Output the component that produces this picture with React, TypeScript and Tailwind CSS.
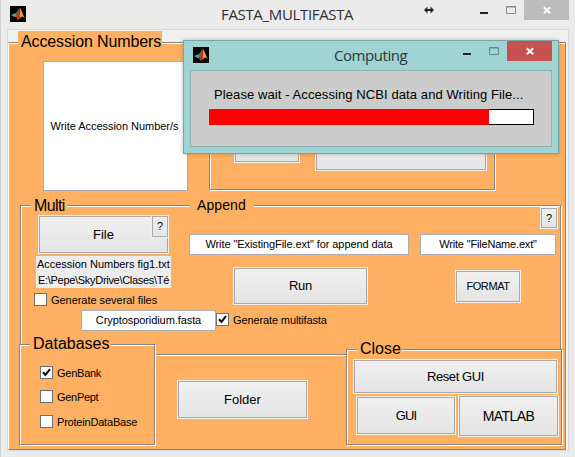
import React from "react";

const etched =
  "border border-[#858585] shadow-[1px_1px_0_#fff,inset_1px_1px_0_#fff]";

function Button({
  className,
  children,
}: {
  className: string;
  children?: React.ReactNode;
}) {
  return (
    <div className={`shrink-0 bg-[#f3efeb] p-px ${className}`}>
      <button className="flex h-full w-full items-center justify-center border border-[#a9a9a9] bg-linear-to-b from-[#f0f0f0] to-[#e4e4e4] whitespace-nowrap">
        {children}
      </button>
    </div>
  );
}

function Edit({
  className,
  children,
}: {
  className: string;
  children: React.ReactNode;
}) {
  return (
    <div
      className={`flex shrink-0 items-center justify-center border border-[#abadb3] bg-white text-[11px] leading-[11px] whitespace-nowrap ${className}`}
    >
      {children}
    </div>
  );
}

function Check({
  className,
  checked,
  children,
}: {
  className?: string;
  checked?: boolean;
  children: React.ReactNode;
}) {
  return (
    <label
      className={`flex h-[13px] shrink-0 items-center gap-1 text-[11px] leading-[13px] whitespace-nowrap ${className ?? ""}`}
    >
      <span className="h-[13px] w-[13px] shrink-0 border border-[#707070] bg-white">
        {checked && (
          <svg width="11" height="11" viewBox="0 0 11 11">
            <path d="M2 5.2 4.4 7.8 9 2.2" fill="none" stroke="#111" strokeWidth="2.1" />
          </svg>
        )}
      </span>
      <span className="pt-px">{children}</span>
    </label>
  );
}

function Legend({
  className,
  children,
}: {
  className: string;
  children: React.ReactNode;
}) {
  return (
    <div className={`shrink-0 bg-[#ffb062] whitespace-nowrap ${className}`}>
      {children}
    </div>
  );
}

function Logo() {
  return (
    <svg width="16" height="16" viewBox="0 0 16 16" className="shrink-0">
      <rect width="16" height="16" fill="#050505" />
      <path d="M1 9 5.3 7.2 7.5 9.2 5 11.3Z" fill="#4c9dbb" />
      <path d="M5.3 7.2C7.4 6.5 8.2 3.4 10 2L7.5 9.2Z" fill="#477b91" />
      <path d="M10 2C8.8 4.5 8 8 5 11.3 6.7 10.8 7 13.5 8.3 13.8 10 13 10.7 10.4 12 10.5Z" fill="#b83b16" />
      <path d="M10 2C11.8 4 13 9.5 15 12 13 10.4 11.4 10 9.7 12.3 10.5 9 10.3 5 10 2Z" fill="#f58a2c" />
      <path d="M10 2C10.6 4.3 11 8.5 10.5 10.4L11.8 9.7C11.4 7 10.8 4 10 2Z" fill="#ffc05c" />
    </svg>
  );
}

function Controls({ closeClass, box }: { closeClass: string; box: string }) {
  return (
    <div className="flex items-start">
      <svg width="8" height="20" viewBox="0 0 8 20">
        <path d="M0 12h8v2H0z" fill="#222" />
      </svg>
      <svg width="10" height="20" viewBox="0 0 10 20" className="ml-[18px]">
        <path d="M.5 6.5h9v7h-9zM0 7h10" fill="none" stroke={box} />
      </svg>
      <div className={`ml-2 flex h-5 w-[45px] justify-center ${closeClass}`}>
        <svg width="8" height="20" viewBox="0 0 8 20">
          <path d="m.8 7.3 6.4 6M7.2 7.3l-6.4 6" stroke="#fff" strokeWidth="1.9" />
        </svg>
      </div>
    </div>
  );
}

function Dialog() {
  return (
    <div className="absolute top-[40px] left-[182px] flex h-[114px] w-[376px] flex-col border border-[#79a5a6] bg-[#a0d3d3] px-1.5 shadow-[0_0_4px_rgba(0,0,0,0.25)]">
      <div className="flex h-[29px] shrink-0 items-start">
        <div className="ml-[3px] pt-1.5">
          <Logo />
        </div>
        <div className="ml-[125px] w-[129px] pt-1 font-['Open_Sans',sans-serif] text-[15px] leading-5 tracking-[-0.45px] text-[#2b3838]">
          Computing
        </div>
        <Controls closeClass="bg-[#c75050]" box="#68898a" />
      </div>
      <div className="h-[77px] w-[362px] border border-[#8bb3b3] bg-[#ccc] pt-[15px] pl-[18px]">
        <div className="pl-[5px] text-[13px] leading-[18px] tracking-[0.09px] whitespace-nowrap">
          Please wait - Accessing NCBI data and Writing File...
        </div>
        <div className="mt-[5px] flex h-4 w-[325px] border border-black bg-white">
          <div className="-my-px -ml-px w-[280px] bg-[#f00]" />
        </div>
      </div>
    </div>
  );
}

export default function App() {
  return (
    <div className="relative flex h-[457px] w-[575px] flex-col overflow-hidden border-l border-[#d0d0d0] bg-[#ebebeb] pl-1.5 font-['Liberation_Sans',Arial,sans-serif] text-black">
      <div className="flex h-[29px] shrink-0 items-start">
        <div className="ml-[3px] pt-1.5">
          <Logo />
        </div>
        <div className="ml-[195px] w-[203px] pt-1 font-['Open_Sans',sans-serif] text-[15px] leading-5 tracking-[-0.34px] text-[#2f2f2f]">
          FASTA_MULTIFASTA
        </div>
        <svg width="10" height="20" viewBox="0 0 10 20" className="mr-[46px]">
          <path d="M0 10 3.5 6.5v2.6h3V6.5L10 10l-3.5 3.5v-2.6h-3v2.6z" fill="#222" />
        </svg>
        <Controls closeClass="bg-[#bcbcbc]" box="#8a8a8a" />
      </div>

      <div className="flex h-[422px] w-[562px] shrink-0 flex-col border border-[#d9d9d9] bg-[#f0f0f0]">
        <div className="mt-3 flex h-[408px] w-[558px] shrink-0 flex-col border border-[#858585] border-l-white bg-[#ffb062] shadow-[1px_0_0_#fff,inset_0_1px_0_#fff]">
          <Legend className="-mt-3 ml-[9px] h-[21px] w-[144px] pl-[3px] text-[16px] leading-[21px] tracking-[-0.13px]">
            Accession Numbers
          </Legend>

          <div className="mt-[9px] ml-[34px] flex h-[130px] shrink-0 gap-[21px]">
            <Edit className="w-[145px] pr-[2px] tracking-[-0.04px]">Write Accession Number/s</Edit>
            <div className={`flex h-[129px] w-[286px] items-start pt-[68px] pl-6 ${etched}`}>
              <Button className="h-[33px] w-[66px]" />
              <Button className="ml-[15px] h-[41px] w-[172px]" />
            </div>
          </div>

          <div className={`mt-[14px] ml-[11px] h-[150px] w-[541px] shrink-0 ${etched}`}>
            <div className="flex h-[100px] items-start">
              <div className="flex w-[150px] flex-col">
                <Legend className="-mt-[9px] ml-[10px] h-[18px] w-[36px] pl-[3px] text-[16px] leading-[17px] tracking-[-0.6px]">
                  Multi
                </Legend>
                <div className="relative ml-[17px] h-[39px] w-[131px]">
                  <Button className="h-[39px] w-[131px] text-[13px]">File</Button>
                  <div className="absolute top-0 right-0">
                    <Button className="h-[23px] w-[18px] text-[11px]">?</Button>
                  </div>
                </div>
                <div className="mt-[2px] ml-[15px] h-8 w-[135px] bg-[#ececec] pl-px text-[11px] leading-4 whitespace-nowrap">
                  <div className="tracking-[-0.02px]">Accession Numbers fig1.txt</div>
                  <div className="pl-px tracking-[-0.3px]">E:\Pepe\SkyDrive\Clases\Té</div>
                </div>
                <Check className="mt-[5px] ml-[13px] tracking-[-0.04px]">Generate several files</Check>
              </div>

              <div className="ml-[18px] flex w-[220px] flex-col">
                <Legend className="-mt-[9px] ml-px h-[18px] w-[64px] pl-[7px] text-[14px] leading-[17px] tracking-[0.1px]">
                  Append
                </Legend>
                <Edit className="mt-[19px] h-[21px] tracking-[-0.08px]">Write "ExistingFile.ext" for append data</Edit>
                <Button className="mt-3 ml-[44px] h-[38px] w-[135px] text-[13px] tracking-[-0.3px]">Run</Button>
              </div>

              <div className="ml-[11px] flex w-[138px] flex-col">
                <Button className="mt-px ml-[120px] h-[22px] w-[18px] text-[11px]">?</Button>
                <Edit className="mt-[5px] h-[21px] w-[136px] tracking-[-0.18px]">Write "FileName.ext"</Edit>
                <Button className="mt-[15px] ml-[35px] h-[33px] w-[66px] text-[11px] tracking-[-0.4px]">FORMAT</Button>
              </div>
            </div>
            <div className="mt-1 ml-[60px] flex">
              <Edit className="h-[21px] w-[135px] tracking-[-0.08px]">Cryptosporidium.fasta</Edit>
              <Check className="mt-[3px] tracking-[-0.12px]" checked>
                Generate multifasta
              </Check>
            </div>
          </div>

          <div className="-mt-[11px] flex shrink-0 items-start">
            <div className={`ml-[10px] flex h-[101px] w-[136px] flex-col bg-[#ffb062] ${etched}`}>
              <Legend className="-mt-[10px] ml-[10px] h-[18px] w-[81px] pl-[3px] text-[16px] leading-[18px]">
                Databases
              </Legend>
              <Check className="mt-[13px] ml-5 tracking-[-0.25px]" checked>
                GenBank
              </Check>
              <Check className="mt-[11px] ml-5 tracking-[-0.3px]">GenPept</Check>
              <Check className="mt-3 ml-5 tracking-[-0.2px]">ProteinDataBase</Check>
            </div>
            <Button className="mt-9 ml-[22px] h-[39px] w-[131px] text-[13px]">Folder</Button>
            <div className={`mt-[5px] ml-[38px] flex h-[96px] w-[216px] flex-col bg-[#ffb062] ${etched}`}>
              <Legend className="-mt-[10px] ml-[10px] h-[18px] w-[45px] pl-[3px] text-[16px] leading-[17px]">
                Close
              </Legend>
              <Button className="mt-px ml-1.5 h-[35px] w-[205px] text-[13px] tracking-[-0.4px]">Reset GUI</Button>
              <div className="mt-px ml-[9px] flex gap-[2px]">
                <Button className="mt-px h-[39px] w-[100px] text-[13px] tracking-[-0.8px]">GUI</Button>
                <Button className="h-[42px] w-[101px] text-[14px] tracking-[-0.6px]">MATLAB</Button>
              </div>
            </div>
          </div>
        </div>
      </div>

      <Dialog />
    </div>
  );
}
